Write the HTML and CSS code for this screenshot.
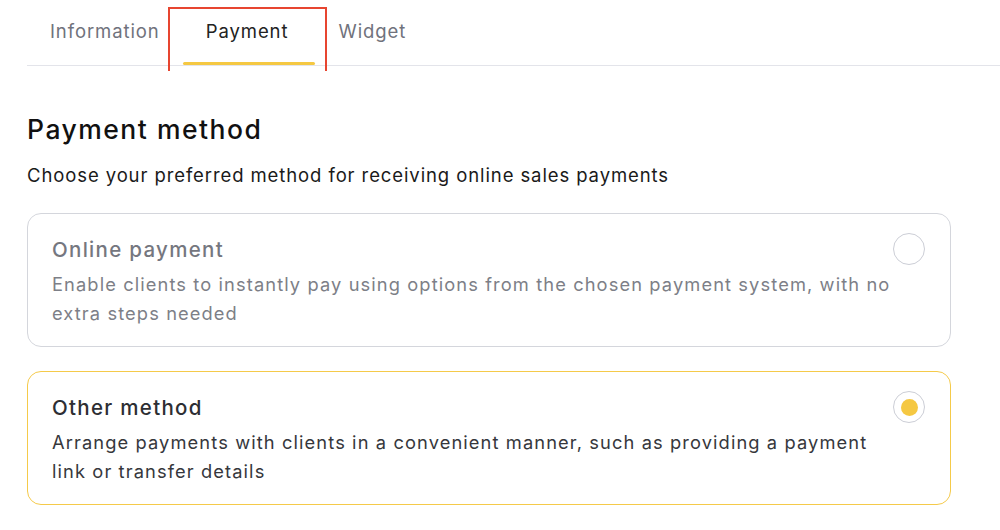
FILE: index.html
```html
<!DOCTYPE html>
<html lang="en">
<head>
    <meta charset="UTF-8">
    <meta name="viewport" content="width=device-width, initial-scale=1.0">
    <title>Settings - Payment</title>
    <link rel="stylesheet" href="styles.css">
</head>
<body>
    <div class="tabs">
        <div class="tab">Information</div>
        <div class="tab active">Payment</div>
        <div class="tab">Widget</div>
    </div>

    <div class="content">
        <h1 class="title">Payment method</h1>
        <p class="subtitle">Choose your preferred method for receiving online sales payments</p>

        <div class="option">
            <div class="option-text">
                <div class="option-name">Online payment</div>
                <div class="option-desc">Enable clients to instantly pay using options from the chosen payment system, with no extra steps needed</div>
            </div>
            <span class="radio"></span>
        </div>

        <div class="option selected">
            <div class="option-text">
                <div class="option-name">Other method</div>
                <div class="option-desc">Arrange payments with clients in a convenient manner, such as providing a payment link or transfer details</div>
            </div>
            <span class="radio"></span>
        </div>
    </div>
</body>
</html>
```

FILE: styles.css
```css
body {
    margin: 0;
    background: #fff;
    font-family: Inter, "Noto Sans", sans-serif;
    color: #1f2023;
}

.tabs {
    display: flex;
    margin-left: 27px;
    padding-left: 23px;
    border-bottom: 1px solid #e3e4ea;
    height: 65px;
}

.tab {
    font-size: 18.5px;
    letter-spacing: 0.9px;
    color: #70727c;
    padding-top: 20px;
    box-sizing: border-box;
}

.tab.active {
    color: #222;
    width: 159px;
    height: 64px;
    margin: 7px 12px 0 8px;
    padding-top: 11px;
    text-align: center;
    border: 2px solid #e74530;
    border-bottom: none;
    position: relative;
}

.tab.active::after {
    content: "";
    position: absolute;
    left: 13px;
    right: 10px;
    bottom: 6px;
    height: 3px;
    border-radius: 2px;
    background: #f5c842;
}

.content {
    padding: 0 49px 0 27px;
}

.title {
    margin: 47px 0 0;
    font-size: 26.5px;
    font-weight: 500;
    letter-spacing: 1.5px;
    color: #111;
}

.subtitle {
    margin: 19px 0 27px;
    font-size: 18.5px;
    letter-spacing: 0.9px;
    color: #1a1a1a;
}

.option {
    display: flex;
    justify-content: space-between;
    align-items: flex-start;
    border: 1.5px solid #d4d6dc;
    border-radius: 14px;
    padding: 23px 25px 18px 24px;
    margin-bottom: 24px;
}

.option.selected {
    border-color: #f5ca4a;
}

.option-name {
    font-size: 20.5px;
    font-weight: 500;
    letter-spacing: 1.3px;
    color: #75777f;
    margin-bottom: 8px;
}

.option-desc {
    font-size: 18.3px;
    letter-spacing: 1.1px;
    line-height: 29px;
    color: #7d7f87;
    max-width: 850px;
}

.selected .option-name {
    color: #2d2e33;
}

.selected .option-desc {
    color: #36373c;
}

.radio {
    flex-shrink: 0;
    width: 30px;
    height: 30px;
    border: 1.5px solid #ccced6;
    border-radius: 50%;
    margin-top: -4px;
    display: flex;
    align-items: center;
    justify-content: center;
}

.selected .radio::after {
    content: "";
    width: 17px;
    height: 17px;
    border-radius: 50%;
    background: #f5c842;
}
```
